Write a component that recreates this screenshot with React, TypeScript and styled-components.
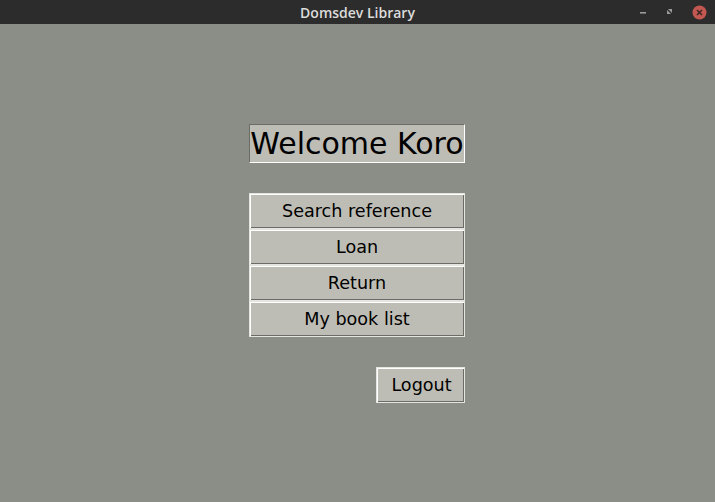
import React from "react";
import styled, { createGlobalStyle } from "styled-components";

const Global = createGlobalStyle`
  html, body { margin: 0; padding: 0; }
  body { width: 715px; height: 502px; overflow: hidden; background: #8a8e87; }
`;

const Window = styled.div`
  width: 715px;
  height: 502px;
  display: flex;
  flex-direction: column;
  background: #8a8e87;
`;

const TitleBar = styled.div`
  height: 24px;
  background: #2c2c2c;
  display: grid;
  grid-template-columns: 1fr auto 1fr;
  align-items: center;
`;

const Title = styled.div`
  grid-column: 2;
  color: #dcdcdc;
  font-family: "Open Sans", "Noto Sans", sans-serif;
  font-weight: 600;
  font-size: 14px;
`;

const Controls = styled.div`
  grid-column: 3;
  justify-self: end;
  display: flex;
  align-items: center;
  gap: 17px;
  padding-right: 8px;
`;

const Content = styled.div`
  flex: 1;
  display: flex;
  flex-direction: column;
  align-items: center;
  padding-top: 100px;
  padding-right: 1px;
`;

const Column = styled.div`
  width: 216px;
  display: flex;
  flex-direction: column;
`;

const WelcomeLabel = styled.div`
  box-sizing: border-box;
  height: 39px;
  background: #bebdb5;
  border-style: solid;
  border-width: 1px;
  border-color: #6a6c67 #ffffff #ffffff #6a6c67;
  display: flex;
  align-items: center;
  justify-content: center;
  font-family: "DejaVu Sans", sans-serif;
  font-size: 30px;
  color: #000;
`;

const Menu = styled.div`
  margin-top: 30px;
  display: flex;
  flex-direction: column;
`;

const TkButton = styled.button<{ $width?: number }>`
  box-sizing: border-box;
  width: ${(p) => (p.$width ? `${p.$width}px` : "100%")};
  height: 36px;
  margin: 0;
  padding: 0 0 1px ${(p) => (p.$width ? "2px" : "0")};
  background: #bebdb5;
  border: 1px solid #e4e4e0;
  box-shadow: inset 1px 1px 0 #ffffff, inset -1px -1px 0 #6b6b68;
  font-family: "DejaVu Sans", sans-serif;
  font-size: 17.6px;
  color: #000;
  display: flex;
  align-items: center;
  justify-content: center;
  cursor: default;
`;

const LogoutRow = styled.div`
  margin-top: 30px;
  display: flex;
  justify-content: flex-end;
`;

export default function App() {
  return (
    <>
      <Global />
      <Window>
        <TitleBar>
          <Title>Domsdev Library</Title>
          <Controls>
            <svg width="10" height="10" viewBox="0 0 10 10">
              <rect x="2" y="5" width="6" height="1.6" fill="#9a9a9a" />
            </svg>
            <svg width="10" height="10" viewBox="0 0 10 10">
              <path d="M3 2 L7 2 L7 6 Z" fill="#9a9a9a" />
              <path d="M2 3 L6 7 L2 7 Z" fill="#9a9a9a" />
            </svg>
            <svg width="15" height="15" viewBox="0 0 15 15">
              <circle cx="7.5" cy="7.5" r="7" fill="#c35850" />
              <path d="M5 5 L10 10 M10 5 L5 10" stroke="#3a2626" strokeWidth="1.6" />
            </svg>
          </Controls>
        </TitleBar>
        <Content>
          <Column>
            <WelcomeLabel>Welcome Koro</WelcomeLabel>
            <Menu>
              <TkButton>Search reference</TkButton>
              <TkButton>Loan</TkButton>
              <TkButton>Return</TkButton>
              <TkButton>My book list</TkButton>
            </Menu>
            <LogoutRow>
              <TkButton $width={89}>Logout</TkButton>
            </LogoutRow>
          </Column>
        </Content>
      </Window>
    </>
  );
}
